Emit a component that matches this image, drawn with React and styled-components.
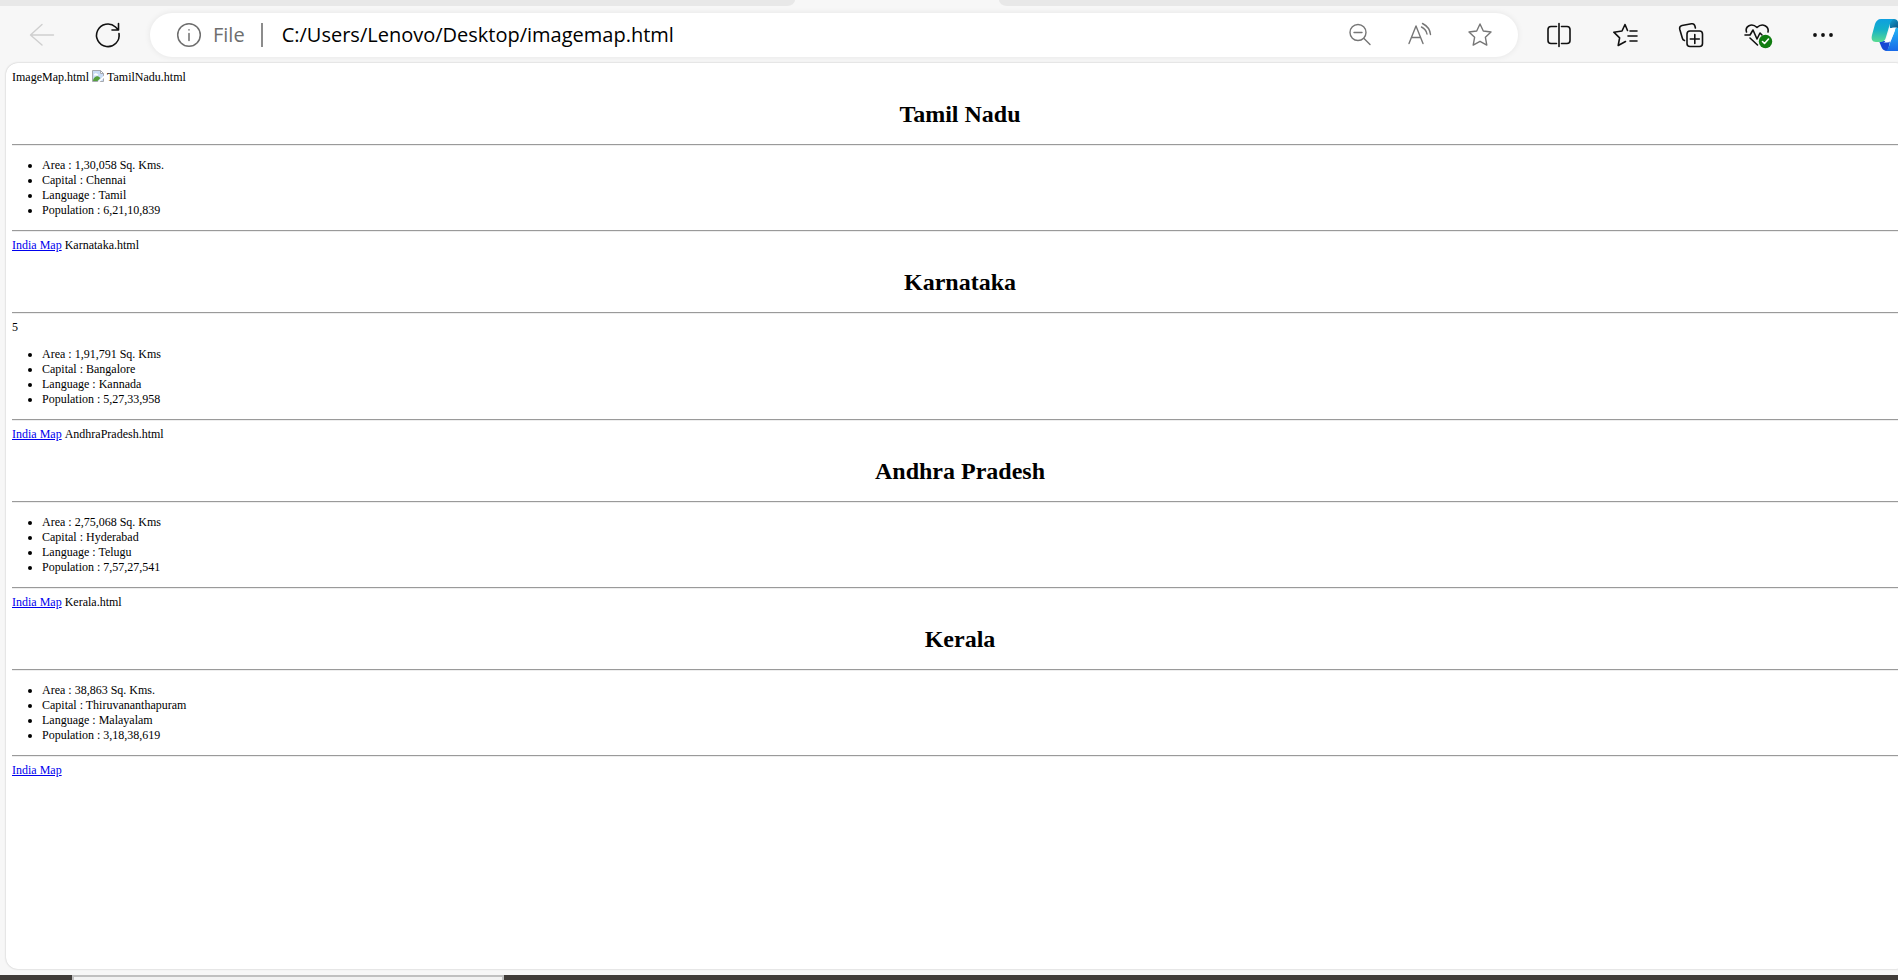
import React from "react";
import styled, { createGlobalStyle } from "styled-components";

const Global = createGlobalStyle`
  html, body { margin: 0; }
  body { background: #f7f7f7; overflow: hidden; }
  *, *::before, *::after { box-sizing: border-box; }
`;

const Window = styled.div`
  display: flex;
  flex-direction: column;
  min-height: 100vh;
  overflow: hidden;
`;

const TabStrip = styled.div`
  display: flex;
  height: 6px;
  background: #f7f7f7;
`;
const TabsBefore = styled.div`
  flex: 0 0 795px;
  background: #e8e8e8;
  border-bottom-right-radius: 8px 6px;
`;
const ActiveTab = styled.div`
  flex: 0 0 204px;
`;
const TabsAfter = styled.div`
  flex: 1;
  background: #e8e8e8;
  border-bottom-left-radius: 8px 6px;
`;

const Toolbar = styled.header`
  display: flex;
  align-items: center;
  height: 57px;
  padding: 1px 0 0 24px;
  overflow: hidden;
`;

const IconButton = styled.button`
  flex: none;
  display: flex;
  align-items: center;
  justify-content: center;
  width: 36px;
  height: 36px;
  padding: 0;
  border: 0;
  background: transparent;
  color: ${(p) => p.$color || "#111"};
  svg { display: block; flex: none; overflow: visible; }
`;

const Nav = styled.nav`
  flex: none;
  display: flex;
  gap: 30px;
  margin-right: 24px;
`;

const AddressBar = styled.div`
  flex: 1;
  min-width: 0;
  display: flex;
  align-items: center;
  height: 44px;
  padding: 0 20px 0 21px;
  border-radius: 22px;
  background: #fff;
  box-shadow: 0 0 6px rgba(0, 0, 0, 0.08);
`;
const Scheme = styled.label`
  margin-left: 6px;
  padding-right: 16px;
  border-right: 2px solid #8c8c8c;
  color: #6e6e6e;
  font: 20px/24px "Open Sans", "Noto Sans", sans-serif;
`;
const Url = styled.input`
  flex: 1;
  min-width: 0;
  padding: 0 0 0 19px;
  border: 0;
  outline: 0;
  background: transparent;
  color: #000;
  font: 20px/28px "Open Sans", "Noto Sans", sans-serif;
`;
const AddressActions = styled.div`
  display: flex;
  gap: 24px;
`;
const Actions = styled.div`
  flex: none;
  display: flex;
  gap: 30px;
  margin: 0 -9px 0 23px;
`;

const Page = styled.main`
  flex: 1;
  margin: 0 -10px 6px 6px;
  padding: 7px 0 0 6px;
  border-radius: 12px;
  background: #fff;
  box-shadow: 0 0 2px rgba(0, 0, 0, 0.25);
  color: #000;
  font: 12px/15px "Liberation Serif", "Times New Roman", serif;
`;
const FileLine = styled.div`
  display: flex;
  gap: 3px;
  height: 15px;
`;
const Heading = styled.h1`
  margin: 16px 0;
  font-size: 24px;
  line-height: 27px;
  text-align: center;
`;
const Rule = styled.hr`
  height: 2px;
  margin: 0 0 6px;
  border: 0;
  border-top: 1px solid #9a9a9a;
  border-bottom: 1px solid #eee;
`;
const Facts = styled.ul`
  margin: 12px 0;
  padding-left: 30px;
`;
const MapLink = styled.a`
  color: #0000ee;
  text-decoration: underline;
`;

const Taskbar = styled.footer`
  display: flex;
  height: 5px;
  padding-left: 72px;
  background: #403c39;
`;
const TaskbarSearch = styled.div`
  width: 432px;
  border: 2px solid #c0c0c0;
  border-bottom: 0;
  background: #f2f2f2;
`;

function Icon({ size = 24, width = 1.4, children }) {
  return (
    <svg width={size} height={size} viewBox="0 0 24 24" fill="none" stroke="currentColor"
      strokeWidth={width} strokeLinecap="round" strokeLinejoin="round" aria-hidden="true">
      {children}
    </svg>
  );
}

function BrokenImage() {
  return (
    <svg width="12" height="12" viewBox="0 0 12 12" role="img" aria-label="India map">
      <path d="M.5.5h8l3 3v8H.5z" fill="#c9dcf6" stroke="#a5a9ae" />
      <path d="M2 4.5c0-1.2 2.500-2 3.500-.5 1 .2 1 1.500 0 1.500H2z" fill="#fff" />
      <path d="M1 11c0-3 3-5 5-4.700L8.500 8 5.500 11z" fill="#55a03c" />
      <path d="M8.500.5v3h3z" fill="#fff" stroke="#a5a9ae" />
      <path d="M12 5.500 5.500 12H7.500L12 8z" fill="#fff" />
    </svg>
  );
}

function Copilot() {
  return (
    <svg width="36" height="34" viewBox="0 0 36 34" aria-hidden="true">
      <defs>
        <linearGradient id="leaf" x1="0" y1="0" x2="0" y2="1">
          <stop offset="0" stopColor="#0f9fe0" />
          <stop offset=".45" stopColor="#14b0c8" />
          <stop offset="1" stopColor="#5bdc92" />
        </linearGradient>
        <linearGradient id="fold" x1="0" y1="0" x2="1" y2="1">
          <stop offset="0" stopColor="#12a5d8" />
          <stop offset="1" stopColor="#084f80" />
        </linearGradient>
        <linearGradient id="tail" x1="0" y1="0" x2="0" y2="1">
          <stop offset="0" stopColor="#24b6f6" />
          <stop offset="1" stopColor="#1769e8" />
        </linearGradient>
      </defs>
      <path d="M8 23h11l-2 10c-4 0-6-2-7-5z" fill="#1748d4" />
      <path d="M18 1h5c3 0 4 2 5 5l1 4H19z" fill="url(#fold)" />
      <path d="M10 1h13c-3 1-4 4-5 8l-3 10c-1 4-3 5-6 5H5c-4 0-5-3-4-7l3-11c1-3 3-5 6-5z" fill="url(#leaf)" />
      <path d="M22 10h12c4 0 5 3 4 7l-4 10c-1 4-3 6-6 6H14c3-1 4-4 5-8l4-10c1-3 1-5-1-5z" fill="url(#tail)" />
      <path d="M23 9.500c-3 0-4 1-5 4l-3 8c-1 2-1 3-3 3h4c3 0 4-2 5-5l3-7c0-2 1-3 3-3z" fill="#fff" />
    </svg>
  );
}

const STAR = "M12 1l3.300 7 7.700 1-5.600 5.300 1.400 7.800-6.800-3.800-6.800 3.800 1.400-7.800L1 9l7.700-1z";

const SECTIONS = [
  { title: "Tamil Nadu", facts: ["Area : 1,30,058 Sq. Kms.", "Capital : Chennai", "Language : Tamil", "Population : 6,21,10,839"], next: "Karnataka.html" },
  { title: "Karnataka", note: "5", facts: ["Area : 1,91,791 Sq. Kms", "Capital : Bangalore", "Language : Kannada", "Population : 5,27,33,958"], next: "AndhraPradesh.html" },
  { title: "Andhra Pradesh", facts: ["Area : 2,75,068 Sq. Kms", "Capital : Hyderabad", "Language : Telugu", "Population : 7,57,27,541"], next: "Kerala.html" },
  { title: "Kerala", facts: ["Area : 38,863 Sq. Kms.", "Capital : Thiruvananthapuram", "Language : Malayalam", "Population : 3,18,38,619"], next: "" },
];

function StateSection({ title, note, facts, next }) {
  return (
    <section>
      <Heading>{title}</Heading>
      <Rule />
      {note && <div>{note}</div>}
      <Facts>{facts.map((f) => <li key={f}>{f}</li>)}</Facts>
      <Rule />
      <FileLine>
        <MapLink href="#map">India Map</MapLink>
        {next && <span>{next}</span>}
      </FileLine>
    </section>
  );
}

export default function App() {
  return (
    <Window>
      <Global />
      <TabStrip><TabsBefore /><ActiveTab /><TabsAfter /></TabStrip>
      <Toolbar>
        <Nav>
          <IconButton $color="#cfcfcf" aria-label="Back">
            <Icon><path d="M23.500 12H.5M12 1.500.5 12 12 22" /></Icon>
          </IconButton>
          <IconButton aria-label="Refresh">
            <Icon width={1.6}><path d="M23 10.500A11.300 11.300 0 1 1 19.500 4L22 6.500M22.500.5v6.500h-6.500" /></Icon>
          </IconButton>
        </Nav>
        <AddressBar>
          <IconButton $color="#6e6e6e" aria-label="Site information">
            <Icon width={1.5}><circle cx="12" cy="12" r="11.300" /><path d="M12 10.500v7M12 6.800v.2" /></Icon>
          </IconButton>
          <Scheme htmlFor="url">File</Scheme>
          <Url id="url" defaultValue="C:/Users/Lenovo/Desktop/imagemap.html" />
          <AddressActions>
            <IconButton $color="#767676" aria-label="Zoom out">
              <Icon><circle cx="10" cy="9.500" r="8" /><path d="M6 9.500h8M16 15.500l6 6" /></Icon>
            </IconButton>
            <IconButton $color="#767676" aria-label="Read aloud">
              <Icon><path d="M1 20.500 8 3l7 17.500M3.500 14.500h9M14.500.5c4 2 7.500 6 8 11M13.500 4c3 1.500 5 4 5.500 7" /></Icon>
            </IconButton>
            <IconButton $color="#767676" aria-label="Add to favorites">
              <Icon><path d={STAR} /></Icon>
            </IconButton>
          </AddressActions>
        </AddressBar>
        <Actions>
          <IconButton aria-label="Split screen">
            <Icon width={1.6}><path d="M12 .5v23M9.500 3.500H4A3 3 0 0 0 1 6.500v11a3 3 0 0 0 3 3h5.500M14.500 3.500H20a3 3 0 0 1 3 3v11a3 3 0 0 1-3 3h-5.500" /></Icon>
          </IconButton>
          <IconButton aria-label="Favorites">
            <Icon width={1.6}><path d="M14.500 7.500 12 1.500 9 8 .8 9.200l5.800 5.600L5.200 22.500l7.300-4M17 8h7M15 13h9M17 18h7" /></Icon>
          </IconButton>
          <IconButton aria-label="Collections">
            <Icon width={1.6}><rect x="8" y="8" width="15.500" height="15.500" rx="3" /><path d="M15.800 11.500v9M11.300 16h9M5.500 17.500c-1.500-.5-2-1.500-2.200-2.500L.8 6.500C.3 4.500 1 3 3 2.500L12.500.8c2-.4 3 .6 3.400 2.200l.5 2" /></Icon>
          </IconButton>
          <IconButton aria-label="Browser essentials">
            <Icon width={1.6}>
              <path d="M1.500 9C-.3 3.500 6.500-.8 12 4.500c5.500-5.300 12.300-1 11 4.500M0 12h5l3-5 4 9 3-6 2 2M5 15l7.500 7" />
              <circle cx="20.500" cy="18.500" r="6.700" fill="#107c10" stroke="none" />
              <path d="m17.500 18.500 2 2 4-4.500" stroke="#fff" />
            </Icon>
          </IconButton>
          <IconButton aria-label="Settings and more">
            <Icon><g fill="currentColor" stroke="none"><circle cx="4" cy="12" r="1.900" /><circle cx="12" cy="12" r="1.900" /><circle cx="20" cy="12" r="1.900" /></g></Icon>
          </IconButton>
          <IconButton aria-label="Copilot"><Copilot /></IconButton>
        </Actions>
      </Toolbar>
      <Page>
        <FileLine>
          <span>ImageMap.html</span>
          <BrokenImage />
          <span>TamilNadu.html</span>
        </FileLine>
        {SECTIONS.map((s) => <StateSection key={s.title} {...s} />)}
      </Page>
      <Taskbar><TaskbarSearch /></Taskbar>
    </Window>
  );
}
